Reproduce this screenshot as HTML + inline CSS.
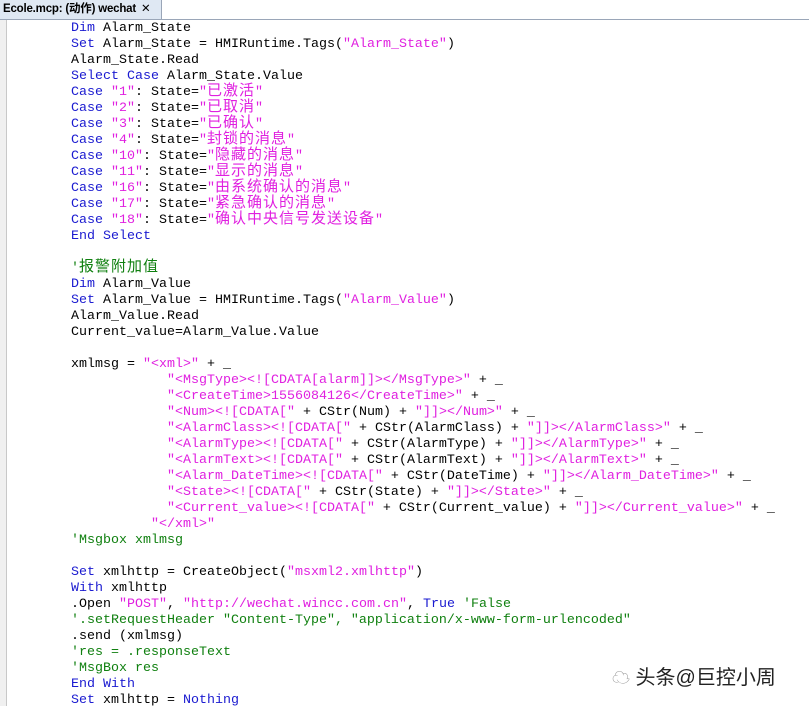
<!DOCTYPE html>
<html><head><meta charset="utf-8"><style>
html,body{margin:0;padding:0;width:809px;height:706px;overflow:hidden;background:#fff}
.top{position:absolute;left:0;top:0;width:809px;height:19px;background:#fff;border-bottom:1px solid #9aa6b8}
.tab{position:absolute;left:0;top:0;width:162px;height:19px;background:#dfe8f3;border-right:1px solid #9aa6b8;font:bold 11.5px "Liberation Sans","Noto Sans CJK SC",sans-serif;letter-spacing:-0.2px;line-height:19px;padding-left:3px;box-sizing:border-box;color:#000;white-space:nowrap;overflow:hidden}
.tab span{margin-left:5px;font-weight:normal}
.gut{position:absolute;left:0;top:20px;width:6px;height:686px;background:#f0f0f0;border-right:1px solid #c8c8c8}
pre{position:absolute;left:71px;top:21px;margin:0;font:13.33px/16px "Liberation Mono",monospace;color:#000}
.z{display:inline-block;height:16px;vertical-align:top;position:relative;top:-3px;overflow:visible;font-size:15px;letter-spacing:1px;font-family:"Noto Sans CJK SC",sans-serif;line-height:16px}
.k{color:#1a1ad0}.s{color:#e020e0}.c{color:#108010}
.wm{position:absolute;left:612px;top:661px;font:20px "Liberation Sans","Noto Sans CJK SC",sans-serif;color:#222;white-space:nowrap}
</style></head><body>
<div class="top"><div class="tab">Ecole.mcp: (动作) wechat<span>✕</span></div></div>
<div class="gut"></div>
<pre><span class="k">Dim</span> Alarm_State
<span class="k">Set</span> Alarm_State = HMIRuntime.Tags(<span class="s">"Alarm_State"</span>)
Alarm_State.Read
<span class="k">Select Case</span> Alarm_State.Value
<span class="k">Case</span> <span class="s">"1"</span>: State=<span class="s">"<span class="z">已激活</span>"</span>
<span class="k">Case</span> <span class="s">"2"</span>: State=<span class="s">"<span class="z">已取消</span>"</span>
<span class="k">Case</span> <span class="s">"3"</span>: State=<span class="s">"<span class="z">已确认</span>"</span>
<span class="k">Case</span> <span class="s">"4"</span>: State=<span class="s">"<span class="z">封锁的消息</span>"</span>
<span class="k">Case</span> <span class="s">"10"</span>: State=<span class="s">"<span class="z">隐藏的消息</span>"</span>
<span class="k">Case</span> <span class="s">"11"</span>: State=<span class="s">"<span class="z">显示的消息</span>"</span>
<span class="k">Case</span> <span class="s">"16"</span>: State=<span class="s">"<span class="z">由系统确认的消息</span>"</span>
<span class="k">Case</span> <span class="s">"17"</span>: State=<span class="s">"<span class="z">紧急确认的消息</span>"</span>
<span class="k">Case</span> <span class="s">"18"</span>: State=<span class="s">"<span class="z">确认中央信号发送设备</span>"</span>
<span class="k">End Select</span>

<span class="c">'<span class="z">报警附加值</span></span>
<span class="k">Dim</span> Alarm_Value
<span class="k">Set</span> Alarm_Value = HMIRuntime.Tags(<span class="s">"Alarm_Value"</span>)
Alarm_Value.Read
Current_value=Alarm_Value.Value

xmlmsg = <span class="s">"&lt;xml&gt;"</span> + _
            <span class="s">"&lt;MsgType&gt;&lt;![CDATA[alarm]]&gt;&lt;/MsgType&gt;"</span> + _
            <span class="s">"&lt;CreateTime&gt;1556084126&lt;/CreateTime&gt;"</span> + _
            <span class="s">"&lt;Num&gt;&lt;![CDATA["</span> + CStr(Num) + <span class="s">"]]&gt;&lt;/Num&gt;"</span> + _
            <span class="s">"&lt;AlarmClass&gt;&lt;![CDATA["</span> + CStr(AlarmClass) + <span class="s">"]]&gt;&lt;/AlarmClass&gt;"</span> + _
            <span class="s">"&lt;AlarmType&gt;&lt;![CDATA["</span> + CStr(AlarmType) + <span class="s">"]]&gt;&lt;/AlarmType&gt;"</span> + _
            <span class="s">"&lt;AlarmText&gt;&lt;![CDATA["</span> + CStr(AlarmText) + <span class="s">"]]&gt;&lt;/AlarmText&gt;"</span> + _
            <span class="s">"&lt;Alarm_DateTime&gt;&lt;![CDATA["</span> + CStr(DateTime) + <span class="s">"]]&gt;&lt;/Alarm_DateTime&gt;"</span> + _
            <span class="s">"&lt;State&gt;&lt;![CDATA["</span> + CStr(State) + <span class="s">"]]&gt;&lt;/State&gt;"</span> + _
            <span class="s">"&lt;Current_value&gt;&lt;![CDATA["</span> + CStr(Current_value) + <span class="s">"]]&gt;&lt;/Current_value&gt;"</span> + _
          <span class="s">"&lt;/xml&gt;"</span>
<span class="c">'Msgbox xmlmsg</span>

<span class="k">Set</span> xmlhttp = CreateObject(<span class="s">"msxml2.xmlhttp"</span>)
<span class="k">With</span> xmlhttp
.Open <span class="s">"POST"</span>, <span class="s">"http://wechat.wincc.com.cn"</span>, <span class="k">True</span> <span class="c">'False</span>
<span class="c">'.setRequestHeader "Content-Type", "application/x-www-form-urlencoded"</span>
.send (xmlmsg)
<span class="c">'res = .responseText</span>
<span class="c">'MsgBox res</span>
<span class="k">End With</span>
<span class="k">Set</span> xmlhttp = <span class="k">Nothing</span></pre>
<div class="wm"><span style="color:#999;font-size:18px">☁</span> 头条@巨控小周</div>
</body></html>
